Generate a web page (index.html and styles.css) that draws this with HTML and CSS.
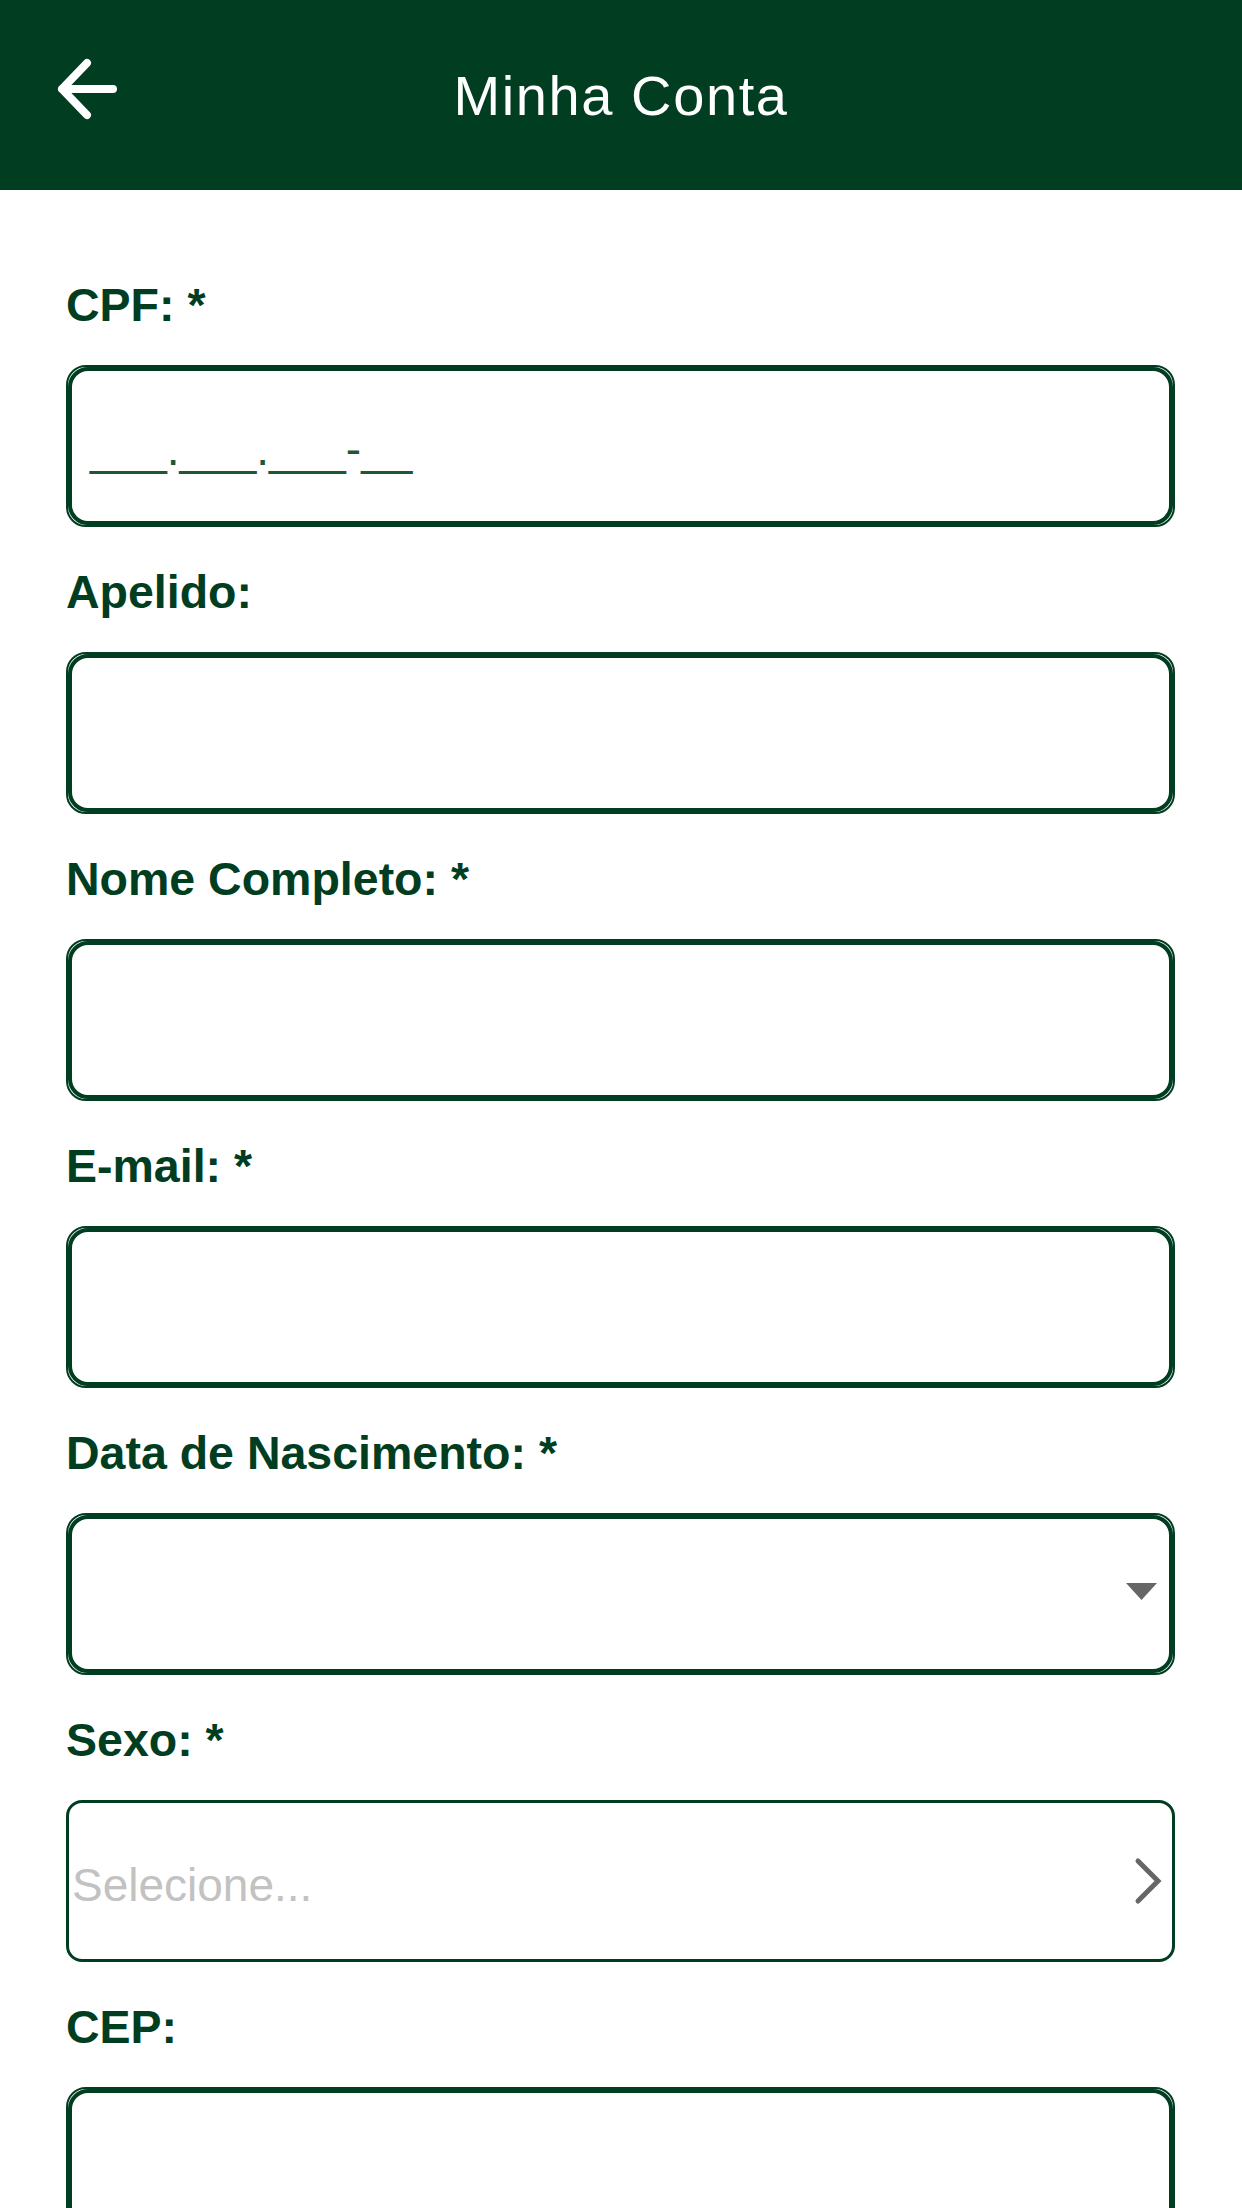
FILE: index.html
```html
<!DOCTYPE html>
<html lang="pt-BR">
<head>
<meta charset="utf-8">
<title>Minha Conta</title>
<link rel="stylesheet" href="styles.css">
</head>
<body>
<header class="topbar">
  <div class="topbar-left">
    <svg class="back-icon" width="140" height="190" viewBox="0 0 140 190" aria-label="Voltar">
      <path d="M113 89 H62 M87 63 L62 89 L87 115" fill="none" stroke="#ffffff" stroke-width="8" stroke-linecap="round" stroke-linejoin="round"/>
    </svg>
  </div>
  <h1 class="title">Minha Conta</h1>
  <div class="topbar-right"></div>
</header>

<main class="form">
  <div class="field">
    <div class="field-label">CPF: *</div>
    <div class="box"><div class="box-inner"><span class="mask">___.___.___-__</span></div></div>
  </div>

  <div class="field">
    <div class="field-label">Apelido:</div>
    <div class="box"><div class="box-inner"></div></div>
  </div>

  <div class="field">
    <div class="field-label">Nome Completo: *</div>
    <div class="box"><div class="box-inner"></div></div>
  </div>

  <div class="field">
    <div class="field-label">E-mail: *</div>
    <div class="box"><div class="box-inner"></div></div>
  </div>

  <div class="field">
    <div class="field-label">Data de Nascimento: *</div>
    <div class="box"><div class="box-inner box-inner--select">
      <span class="spacer"></span>
      <svg class="caret" width="31" height="17" viewBox="0 0 31 17"><polygon points="0,0 31,0 15.5,17" fill="#666666"/></svg>
    </div></div>
  </div>

  <div class="field">
    <div class="field-label">Sexo: *</div>
    <div class="box-single">
      <span class="placeholder">Selecione...</span>
      <svg class="chevron" width="28" height="48" viewBox="0 0 28 48"><path d="M4 4 L24 24 L4 44" fill="none" stroke="#666666" stroke-width="5" stroke-linecap="round" stroke-linejoin="miter"/></svg>
    </div>
  </div>

  <div class="field">
    <div class="field-label">CEP:</div>
    <div class="box"><div class="box-inner"></div></div>
  </div>
</main>
</body>
</html>
```

FILE: styles.css
```css
html, body {
  margin: 0;
  padding: 0;
  background: #ffffff;
}

body {
  font-family: "Liberation Sans", Arial, Helvetica, sans-serif;
  color: #013d21;
  width: 1242px;
}

.topbar {
  height: 190px;
  background: #013d21;
  display: grid;
  grid-template-columns: 1fr auto 1fr;
  align-items: center;
}

.topbar-left {
  height: 190px;
  display: flex;
}

.back-icon {
  display: block;
}

.title {
  margin: 0;
  color: #ffffff;
  font-weight: 400;
  font-size: 56px;
  letter-spacing: 1.6px;
  line-height: 60px;
  white-space: nowrap;
  padding-top: 2px;
}

.form {
  padding: 50px 67px 0 66px;
  display: flex;
  flex-direction: column;
}

.field-label {
  font-weight: 700;
  font-size: 46.5px;
  line-height: 130px;
  height: 125px;
  color: #013d21;
  white-space: nowrap;
}

.box {
  height: 162px;
  box-sizing: border-box;
  border: 2px solid #013d21;
  border-radius: 20px;
}

.box-inner {
  height: 100%;
  box-sizing: border-box;
  border: 4px solid #013d21;
  border-radius: 20px;
  display: flex;
  align-items: center;
  padding: 6px 12px 0 18px;
}

.box-inner--select {
  padding-top: 0;
}

.mask {
  font-size: 46px;
  color: #1f5636;
  white-space: pre;
}

.spacer {
  flex: 1;
}

.caret {
  display: block;
  margin-bottom: 6px;
}

.box-single {
  height: 162px;
  box-sizing: border-box;
  border: 3px solid #013d21;
  border-radius: 16px;
  display: flex;
  align-items: center;
  padding: 8px 10px 0 3px;
}

.placeholder {
  flex: 1;
  font-size: 46px;
  color: #c2c2c2;
  white-space: nowrap;
}

.chevron {
  display: block;
  margin-top: -8px;
}
```
